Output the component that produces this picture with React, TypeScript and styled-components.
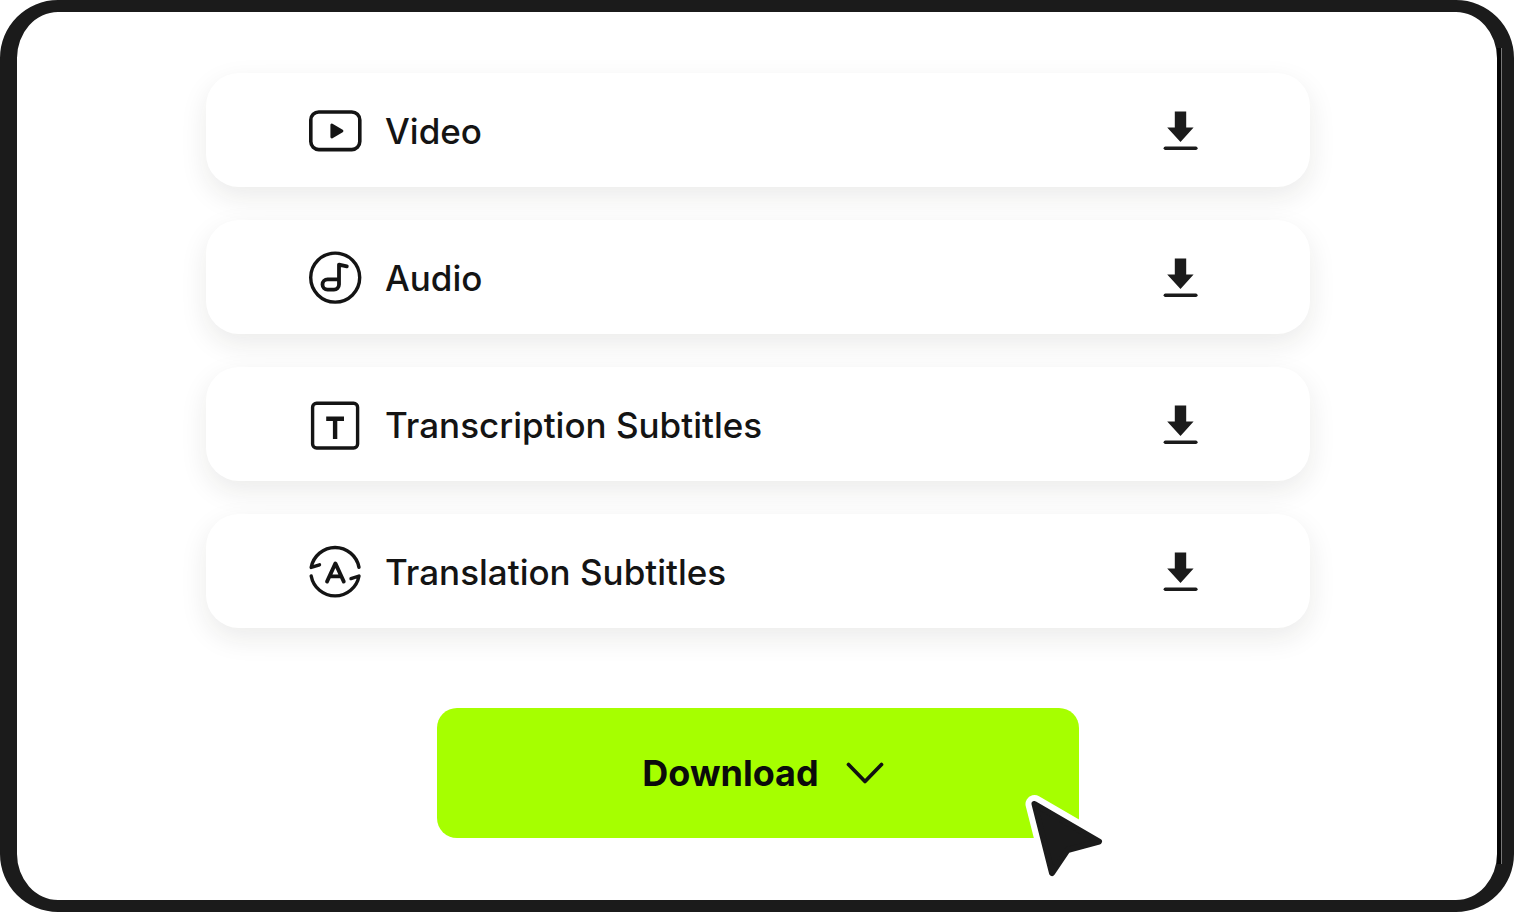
import React from "react";
import styled, { createGlobalStyle } from "styled-components";

const GlobalStyle = createGlobalStyle`
  *, *::before, *::after { box-sizing: border-box; }
  body { margin: 0; background: #fff; font-family: Inter, "Liberation Sans", sans-serif; color: #141414; }
`;

const Frame = styled.main`
  position: relative;
  display: flex;
  flex-direction: column;
  align-items: center;
  min-height: 100vh;
  padding: 61px 24px 62px 26px;
  border: solid #1b1b1b;
  border-width: 12px 17px;
  border-radius: 58px;
  background: #fff;

  &::after {
    content: "";
    position: absolute;
    top: 36px;
    bottom: 36px;
    right: -5px;
    width: 5px;
    border-right: 1px solid #777;
    background: #060606;
  }
`;

const FileList = styled.ul`
  display: flex;
  flex-direction: column;
  gap: 33px;
  width: 100%;
  max-width: 1104px;
  margin: 0 0 80px;
  padding: 0;
  list-style: none;
`;

const FileRow = styled.li`
  display: flex;
  align-items: center;
  gap: 24px;
  min-height: 114px;
  padding: 0 112px 0 103px;
  border-radius: 33px;
  background: #fff;
  box-shadow: 0 10px 28px rgba(30, 30, 20, 0.09);
`;

const FileIcon = styled.svg`
  flex: none;
  width: 52px;
  height: 52px;
  overflow: visible;
  fill: none;
  stroke: #141414;
  stroke-width: 3.4;
  stroke-linecap: round;
  stroke-linejoin: round;
`;

const FileLabel = styled.span`
  flex: 1;
  padding-top: 2px;
  font-size: 35px;
  line-height: 44px;
  font-weight: 500;
`;

const IconButton = styled.button`
  display: flex;
  padding: 0;
  border: 0;
  background: none;
  cursor: pointer;
`;

const Action = styled.div`
  position: relative;
  width: 100%;
  max-width: 642px;
`;

const DownloadButton = styled.button`
  display: flex;
  align-items: center;
  justify-content: center;
  gap: 27px;
  width: 100%;
  height: 130px;
  padding: 0 0 0 10px;
  border: 0;
  border-radius: 20px;
  background: #a6ff00;
  color: #0b0b0b;
  font: 700 36px/48px Inter, "Liberation Sans", sans-serif;
  cursor: pointer;
`;

const Pointer = styled.svg`
  position: absolute;
  right: -31px;
  bottom: -42px;
  pointer-events: none;
`;

const files = [
  {
    label: "Video",
    icon: (
      <>
        <rect x="1.8" y="8" width="49" height="37.6" rx="8" strokeWidth="3.6" />
        <path d="M22.8 21v12l10.2-6z" fill="#141414" strokeWidth="2.8" />
      </>
    ),
  },
  {
    label: "Audio",
    icon: (
      <>
        <circle cx="26.2" cy="26.6" r="24.5" />
        <path d="M30 28.4H18.6a5.1 5.1 0 0 0 0 10.2h6.4a5 5 0 0 0 5-5V13.6l7.8 1.8" strokeWidth="3.8" />
      </>
    ),
  },
  {
    label: "Transcription Subtitles",
    icon: (
      <>
        <rect x="3.6" y="5.2" width="45" height="44.8" rx="4" />
        <path d="M17.2 20.8h17.8M26.1 21v20" strokeWidth="4.4" strokeLinecap="butt" />
      </>
    ),
  },
  {
    label: "Translation Subtitles",
    icon: (
      <>
        <path d="M10.5 19.8 2.2 22.4A24.3 24.3 0 0 1 50 22.4" />
        <path d="M2.2 31A24.3 24.3 0 0 0 50 31L42 33.6" />
        <path d="m18 36.6 8.4-18.2 8.4 18.2M21 31.4h10.8" strokeWidth="3.8" />
      </>
    ),
  },
];

export default function App() {
  return (
    <>
      <GlobalStyle />
      <Frame>
        <FileList>
          {files.map(({ label, icon }) => (
            <FileRow key={label}>
              <FileIcon viewBox="0 0 52 52" aria-hidden="true">{icon}</FileIcon>
              <FileLabel>{label}</FileLabel>
              <IconButton type="button" aria-label={`Download ${label}`}>
                <svg width="36" height="42" viewBox="0 0 36 42" aria-hidden="true">
                  <path d="M12.8 2.4h11.4v16.2h7.4L18.5 33 5.2 18.6h7.6z" fill="#1b1b1b" />
                  <path d="M3.4 39.2h30.4" stroke="#1b1b1b" strokeWidth="3.6" strokeLinecap="round" />
                </svg>
              </IconButton>
            </FileRow>
          ))}
        </FileList>
        <Action>
          <DownloadButton type="button">
            Download
            <svg width="38" height="22" viewBox="0 0 38 22" fill="none" aria-hidden="true">
              <path d="m2.5 2.5 16.5 17 16.5-17" stroke="#111" strokeWidth="3.7" strokeLinecap="round" strokeLinejoin="round" />
            </svg>
          </DownloadButton>
          <Pointer width="90" height="90" viewBox="0 0 90 90" aria-hidden="true">
            <g strokeLinejoin="round">
              <path d="M14.5 14 79 51.5 47.5 60 32 83z" fill="#fff" stroke="#fff" strokeWidth="18" />
              <path d="M14.5 14 79 51.5 47.5 60 32 83z" fill="#1b1b1b" stroke="#1b1b1b" strokeWidth="6" />
            </g>
          </Pointer>
        </Action>
      </Frame>
    </>
  );
}
